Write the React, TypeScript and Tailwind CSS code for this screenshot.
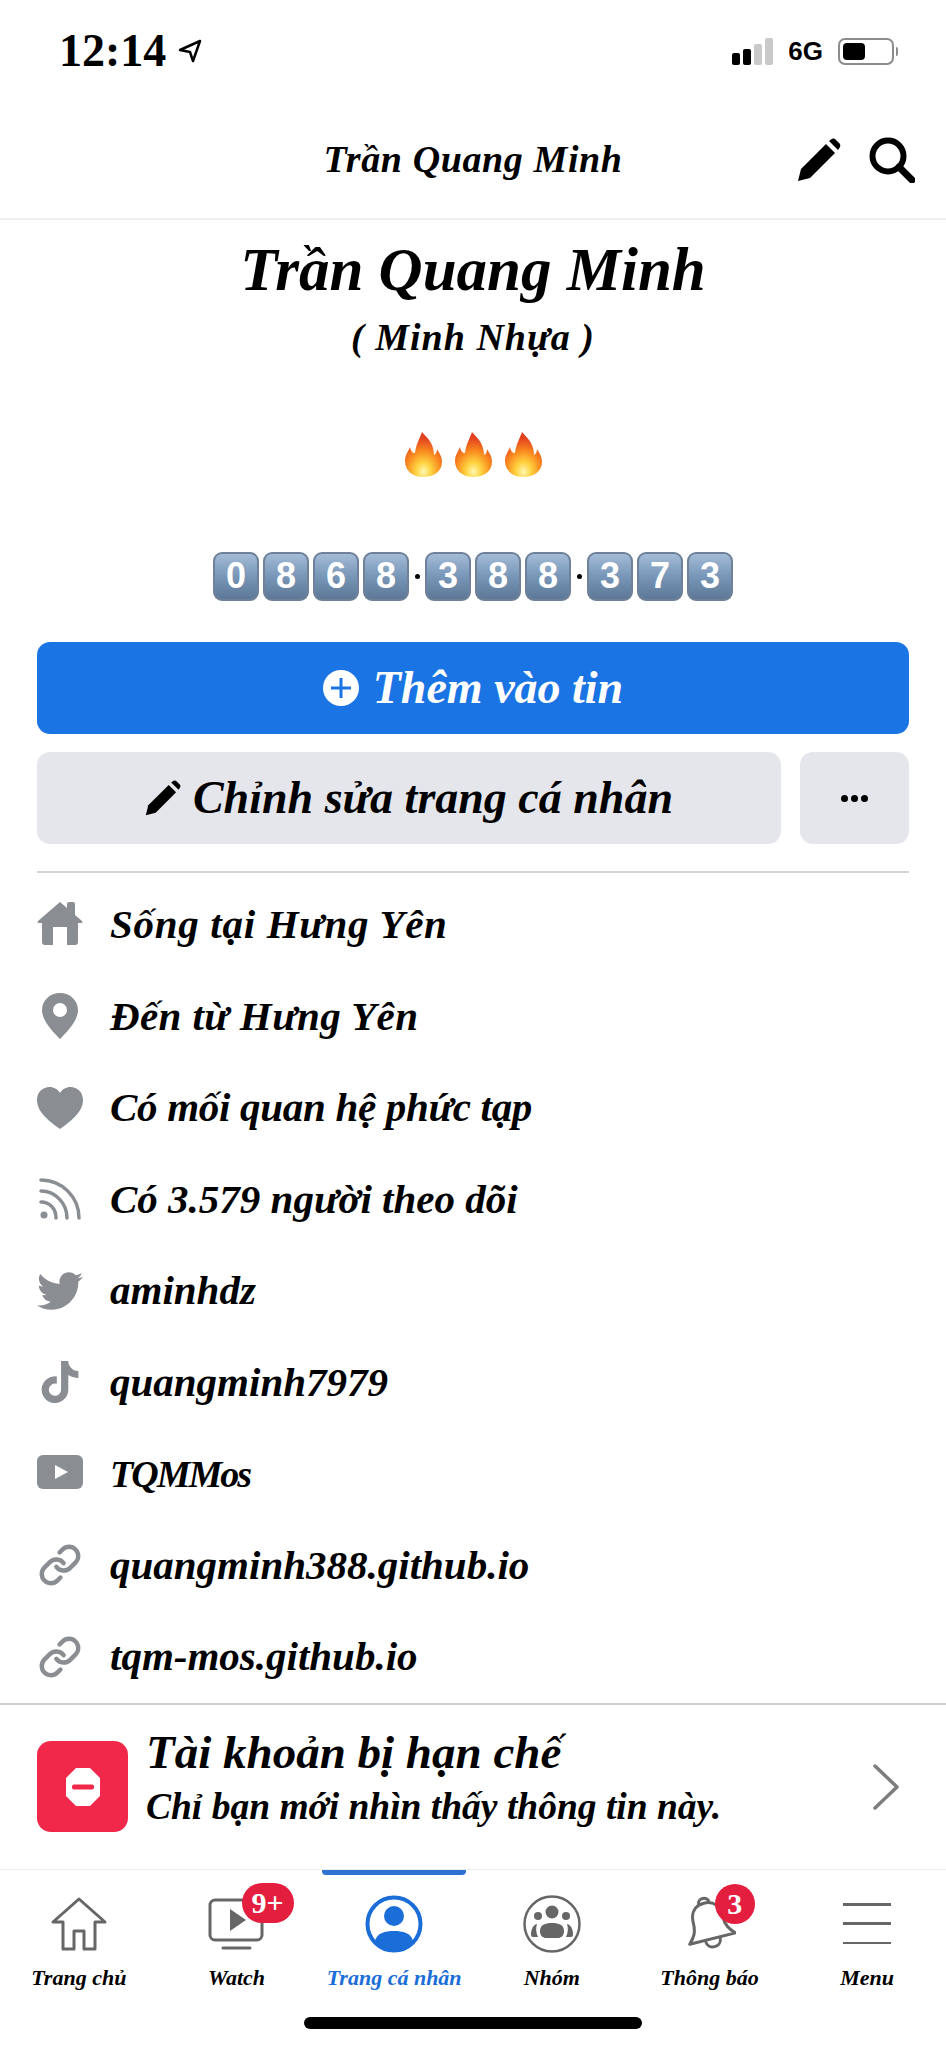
import { Link } from "lucide-react";
import { FaTiktok, FaTwitter } from "react-icons/fa";
import type { ReactNode } from "react";

const GRAY = "#8a8d91";

function PencilIcon({ className }: { className: string }) {
  return (
    <svg viewBox="0 0 44 44" className={className} fill="currentColor">
      <path d="M1 43 L4 31 L29 6 L38 15 L13 40 Z" />
      <path d="M32 3 L35 0.8 Q37 0 38.5 1.5 L42.5 5.5 Q44 7 43 9 L41 12 Z" />
    </svg>
  );
}

function HomeIcon() {
  return (
    <svg viewBox="0 0 46 44" className="w-[46px] h-[44px] -mt-[3px]" fill={GRAY}>
      <path d="M23 1 L30 7 V3 Q30 1 32 1 H36 Q38 1 38 3 V14 L45 20 Q46.500 22 44 22 H41 V41 Q41 44 38 44 H30 V26 H16 V44 H8 Q5 44 5 41 V22 H2 Q-0.500 22 1 20 Z" />
    </svg>
  );
}

function PinIcon() {
  return (
    <svg viewBox="0 0 36 46" className="w-[36px] h-[46px]" fill={GRAY}>
      <path
        fillRule="evenodd"
        d="M18 0 C8 0 0 7.500 0 17 C0 28 12 40 18 46 C24 40 36 28 36 17 C36 7.500 28 0 18 0 Z M18 10 A7 7 0 1 1 18 24 A7 7 0 1 1 18 10 Z"
      />
    </svg>
  );
}

function HeartIcon() {
  return (
    <svg viewBox="0 0 46 42" className="w-[46px] h-[42px]" fill={GRAY}>
      <path d="M23 42 C12 34 0 25 0 13 C0 5 6 0 12.500 0 C17 0 21 2.500 23 6 C25 2.500 29 0 33.500 0 C40 0 46 5 46 13 C46 25 34 34 23 42 Z" />
    </svg>
  );
}

function RssIcon() {
  return (
    <svg viewBox="0 0 42 42" className="w-[42px] h-[42px]" fill="none" stroke={GRAY} strokeWidth="3.500" strokeLinecap="round">
      <circle cx="5" cy="37" r="3.500" fill={GRAY} stroke="none" />
      <path d="M2 24 C10 24 17 30 17 40" />
      <path d="M2 13 C16 13 28 25 28 40" />
      <path d="M2 2 C23 2 40 19 40 40" />
    </svg>
  );
}

function YoutubeIcon() {
  return (
    <svg viewBox="0 0 46 34" className="w-[46px] h-[34px] -mt-[3px]">
      <rect width="46" height="34" rx="6" fill={GRAY} />
      <path d="M18 10 L31 17 L18 24 Z" fill="#fff" />
    </svg>
  );
}

function FireIcon() {
  return (
    <svg viewBox="0 0 38 46" className="w-[38px] h-[46px]">
      <defs>
        <radialGradient id="flame" cx="50%" cy="88%" r="75%">
          <stop offset="0%" stopColor="#fff7b0" />
          <stop offset="28%" stopColor="#ffd23f" />
          <stop offset="62%" stopColor="#f98a1f" />
          <stop offset="100%" stopColor="#e2401f" />
        </radialGradient>
      </defs>
      <path
        fill="url(#flame)"
        d="M19 46 C8 46 1 39 1 30 C1 24 4 21 6 16 C7 21 9 22 11 22 C12 13 16 7 18 1 C21 5 27 9 29 17 C29.500 19 30 21 30 24 C32 23 33 21 33 18 C36 23 38 26 38 31 C38 40 30 46 19 46 Z"
      />
    </svg>
  );
}

function Keycap({ digit }: { digit: string }) {
  return (
    <div className="w-[46px] h-[49px] rounded-[9px] border-2 border-[#6f8299] bg-linear-to-b from-[#a3bbd6] via-[#7896b8] to-[#5d7896] flex items-center justify-center text-white text-[36px] leading-none font-bold not-italic font-['Liberation_Sans',sans-serif]">
      {digit}
    </div>
  );
}

function KeyDot() {
  return <div className="w-[5px] h-[5px] rounded-full bg-black mx-[1.500px]" />;
}

const rows: { icon: ReactNode; text: string; textClass?: string }[] = [
  { icon: <HomeIcon />, text: "Sống tại Hưng Yên", textClass: "tracking-[0.7px]" },
  { icon: <PinIcon />, text: "Đến từ Hưng Yên", textClass: "tracking-[0.4px]" },
  { icon: <HeartIcon />, text: "Có mối quan hệ phức tạp", textClass: "tracking-[-0.3px]" },
  { icon: <RssIcon />, text: "Có 3.579 người theo dõi" },
  { icon: <FaTwitter size={46} color={GRAY} />, text: "aminhdz" },
  { icon: <FaTiktok size={42} color={GRAY} />, text: "quangminh7979" },
  { icon: <YoutubeIcon />, text: "TQMMos", textClass: "text-[38px] tracking-[-2px]" },
  { icon: <Link size={44} color={GRAY} strokeWidth={2.4} />, text: "quangminh388.github.io" },
  { icon: <Link size={44} color={GRAY} strokeWidth={2.4} />, text: "tqm-mos.github.io" },
];

function TabHome() {
  return (
    <svg viewBox="0 0 56 54" className="w-[56px] h-[54px]" fill="none" stroke="#666" strokeWidth="3" strokeLinejoin="round">
      <path d="M28 2 L54 25 H44 V52 H33 V34 H23 V52 H12 V25 H2 Z" />
    </svg>
  );
}

function TabWatch() {
  return (
    <svg viewBox="0 0 56 52" className="w-[56px] h-[52px]" fill="none" stroke="#666" strokeWidth="3">
      <rect x="2" y="2" width="52" height="40" rx="5" />
      <path d="M15 50 H42" strokeLinecap="round" />
      <path d="M22 11 L38 22 L22 33 Z" fill="#666" stroke="none" />
    </svg>
  );
}

function TabProfile() {
  return (
    <svg viewBox="0 0 58 58" className="w-[58px] h-[58px]">
      <circle cx="29" cy="29" r="26.500" fill="none" stroke="#1b6ed8" strokeWidth="4" />
      <circle cx="29" cy="21" r="10" fill="#1b6ed8" />
      <path d="M10 46 C12 38 20 36 29 36 C38 36 46 38 48 46 C43 52 36 55 29 55 C22 55 15 52 10 46 Z" fill="#1b6ed8" />
    </svg>
  );
}

function TabGroups() {
  return (
    <svg viewBox="0 0 58 58" className="w-[58px] h-[58px]" fill="#666">
      <circle cx="29" cy="29" r="27.500" fill="none" stroke="#666" strokeWidth="2.500" />
      <circle cx="29" cy="17" r="6.500" />
      <circle cx="15" cy="21" r="4" />
      <circle cx="43" cy="21" r="4" />
      <path d="M17 36 C17 30 22 28 29 28 C36 28 41 30 41 36 C41 41 38 43 35 43 H23 C20 43 17 41 17 36 Z" />
      <path d="M8 40 C8 34 10 30 14 29 C12.500 33 13 38 15 42 H10 Q8 42 8 40 Z" />
      <path d="M50 40 C50 34 48 30 44 29 C45.500 33 45 38 43 42 H48 Q50 42 50 40 Z" />
    </svg>
  );
}

function TabBell() {
  return (
    <svg viewBox="0 0 50 56" className="w-[54px] h-[60px]" fill="none" stroke="#666" strokeWidth="2.800" strokeLinejoin="round">
      <g transform="rotate(-14 25 28)">
        <path d="M25 8 C15 8 11 15 11 24 C11 33 8 37 3 42 H47 C42 37 39 33 39 24 C39 15 35 8 25 8 Z" />
        <path d="M20 8 C20 2 30 2 30 8" />
        <path d="M18 43 C18 52 32 52 32 43" />
      </g>
    </svg>
  );
}

function TabMenu() {
  return (
    <div className="w-[48px] h-[41px] flex flex-col justify-between">
      <div className="h-[2.500px] bg-[#666]" />
      <div className="h-[2.500px] bg-[#666]" />
      <div className="h-[2.500px] bg-[#666]" />
    </div>
  );
}

function Badge({ text, className }: { text: string; className: string }) {
  return (
    <div className={`absolute h-[40px] rounded-full bg-[#e41e3f] text-white text-[30px] leading-none font-bold not-italic flex items-center justify-center ${className}`}>
      {text}
    </div>
  );
}

const tabs: { label: string; icon: ReactNode; active?: boolean; badge?: ReactNode }[] = [
  { label: "Trang chủ", icon: <TabHome /> },
  { label: "Watch", icon: <TabWatch />, badge: <Badge text="9+" className="w-[52px] left-[84px] top-[13px]" /> },
  { label: "Trang cá nhân", icon: <TabProfile />, active: true },
  { label: "Nhóm", icon: <TabGroups /> },
  { label: "Thông báo", icon: <TabBell />, badge: <Badge text="3" className="w-[40px] left-[84px] top-[14px]" /> },
  { label: "Menu", icon: <TabMenu /> },
];

export default function App() {
  return (
    <div className="w-[946px] h-[2048px] overflow-hidden bg-white text-black italic font-bold font-['Liberation_Serif',serif]">
      {/* Status bar */}
      <div className="h-[100px] pt-[30px] pl-[59px] pr-[48px] flex items-start justify-between">
        <div className="flex items-center gap-[12px]">
          <span className="text-[46px] leading-[42px] font-black not-italic">12:14</span>
          <svg viewBox="0 0 24 24" className="w-[24px] h-[24px]" fill="none" stroke="#000" strokeWidth="2.500" strokeLinejoin="round">
            <path d="M22 2 L2 11 L12 13 L15 22 Z" />
          </svg>
        </div>
        <div className="flex items-end gap-[15px] pt-[8px]">
          <div className="flex items-end gap-[3px] h-[27px]">
            <div className="w-[8px] h-[12px] rounded-[2px] bg-black" />
            <div className="w-[8px] h-[16px] rounded-[2px] bg-black" />
            <div className="w-[8px] h-[21px] rounded-[2px] bg-[#c9c9c9]" />
            <div className="w-[8px] h-[27px] rounded-[2px] bg-[#c9c9c9]" />
          </div>
          <span className="text-[26px] leading-[27px] not-italic font-['Liberation_Sans',sans-serif]">6G</span>
          <div className="flex items-center gap-[2px]">
            <div className="w-[56px] h-[27px] rounded-[7px] border-2 border-[#8c8c8c] p-[3px]">
              <div className="w-[22px] h-full rounded-[4px] bg-black" />
            </div>
            <div className="w-[2px] h-[9px] rounded-r bg-[#8c8c8c]" />
          </div>
        </div>
      </div>

      {/* Header */}
      <div className="h-[120px] border-b-2 border-[#efefef] relative flex items-center justify-center">
        <span className="text-[38px] leading-none tracking-[0.6px]">Trần Quang Minh</span>
        <div className="absolute right-[31px] top-[37px] flex items-center gap-[28px]">
          <PencilIcon className="w-[44px] h-[44px]" />
          <svg viewBox="0 0 46 46" className="w-[46px] h-[46px]" fill="none" stroke="#000" strokeWidth="6">
            <circle cx="19" cy="19" r="15.500" />
            <path d="M30 30 L43 43" strokeLinecap="round" strokeWidth="7" />
          </svg>
        </div>
      </div>

      {/* Profile */}
      <div className="flex flex-col items-center pt-[15px]">
        <div className="h-[70px] text-[61px] leading-[70px]">Trần Quang Minh</div>
        <div className="h-[40px] mt-[12px] text-[38px] leading-[40px] tracking-[1px]">( Minh Nhựa )</div>
        <div className="h-[46px] mt-[74px] flex gap-[12px]">
          <FireIcon />
          <FireIcon />
          <FireIcon />
        </div>
        <div className="h-[50px] mt-[74px] flex items-center gap-[4px]">
          {"0868".split("").map((d, i) => (
            <Keycap key={i} digit={d} />
          ))}
          <KeyDot />
          {"388".split("").map((d, i) => (
            <Keycap key={i} digit={d} />
          ))}
          <KeyDot />
          {"373".split("").map((d, i) => (
            <Keycap key={i} digit={d} />
          ))}
        </div>
      </div>

      {/* Buttons */}
      <div className="px-[37px] mt-[41px]">
        <button className="w-full h-[92px] rounded-[13px] bg-[#1b74e4] text-white flex items-center justify-center gap-[14px] text-[46px] leading-none italic font-bold">
          <svg viewBox="0 0 36 36" className="w-[36px] h-[36px]">
            <circle cx="18" cy="18" r="18" fill="#fff" />
            <path d="M18 8 V28 M8 18 H28" stroke="#1b74e4" strokeWidth="3" />
          </svg>
          Thêm vào tin
        </button>
        <div className="flex gap-[19px] mt-[18px]">
          <button className="flex-1 h-[92px] rounded-[13px] bg-[#e4e6eb] flex items-center justify-center gap-[12px] text-[46px] leading-none italic font-bold">
            <PencilIcon className="w-[36px] h-[36px]" />
            Chỉnh sửa trang cá nhân
          </button>
          <button className="w-[109px] h-[92px] rounded-[13px] bg-[#e4e6eb] flex items-center justify-center gap-[3px]">
            <span className="w-[7px] h-[7px] rounded-full bg-black" />
            <span className="w-[7px] h-[7px] rounded-full bg-black" />
            <span className="w-[7px] h-[7px] rounded-full bg-black" />
          </button>
        </div>
        <div className="h-[2px] bg-[#d4d4d4] mt-[27px]" />
      </div>

      {/* Info rows */}
      <div className="mt-[6px]">
        {rows.map((row) => (
          <div key={row.text} className="h-[91.500px] pl-[37px] flex items-center">
            <div className="w-[46px] flex justify-center shrink-0">{row.icon}</div>
            <span className={`ml-[27px] leading-none ${row.textClass ?? ""} ${row.textClass?.includes("text-[38px]") ? "" : "text-[41px]"}`}>{row.text}</span>
          </div>
        ))}
      </div>

      {/* Restricted banner */}
      <div className="h-[167px] border-t-2 border-[#cfcfcf] border-b border-b-[#eeeeee] pl-[37px] pr-[46px] flex items-center">
        <div className="w-[91px] h-[91px] rounded-[14px] bg-[#f1284a] flex items-center justify-center shrink-0">
          <svg viewBox="0 0 34 38" className="w-[34px] h-[38px]">
            <path d="M10 0 H24 L34 10 V28 L24 38 H10 L0 28 V10 Z" fill="#fff" />
            <rect x="6" y="16.500" width="22" height="5" rx="2" fill="#f1284a" />
          </svg>
        </div>
        <div className="ml-[18px] flex-1 pb-[18px]">
          <div className="text-[47px] leading-[50px]">Tài khoản bị hạn chế</div>
          <div className="text-[37.500px] leading-[42px] mt-[9px]">Chỉ bạn mới nhìn thấy thông tin này.</div>
        </div>
        <svg viewBox="0 0 28 46" className="w-[28px] h-[46px]" fill="none" stroke="#7d7d7d" strokeWidth="3.500" strokeLinecap="round" strokeLinejoin="round">
          <path d="M3 2 L25 23 L3 44" />
        </svg>
      </div>

      {/* Bottom tabs */}
      <div className="grid grid-cols-6">
        {tabs.map((tab) => (
          <div key={tab.label} className={`relative flex flex-col items-center pt-[24px] ${tab.active ? "text-[#1b6ed8]" : "text-black"}`}>
            {tab.active && <div className="absolute top-0 left-[7px] w-[144px] h-[5px] rounded-b bg-[#2d72d2]" />}
            <div className="h-[60px] flex items-center justify-center">{tab.icon}</div>
            {tab.badge}
            <div className="mt-[11px] text-[22px] leading-[25px] whitespace-nowrap">{tab.label}</div>
          </div>
        ))}
      </div>
      <div className="mt-[27px] mx-auto w-[338px] h-[12px] rounded-full bg-black" />
    </div>
  );
}
